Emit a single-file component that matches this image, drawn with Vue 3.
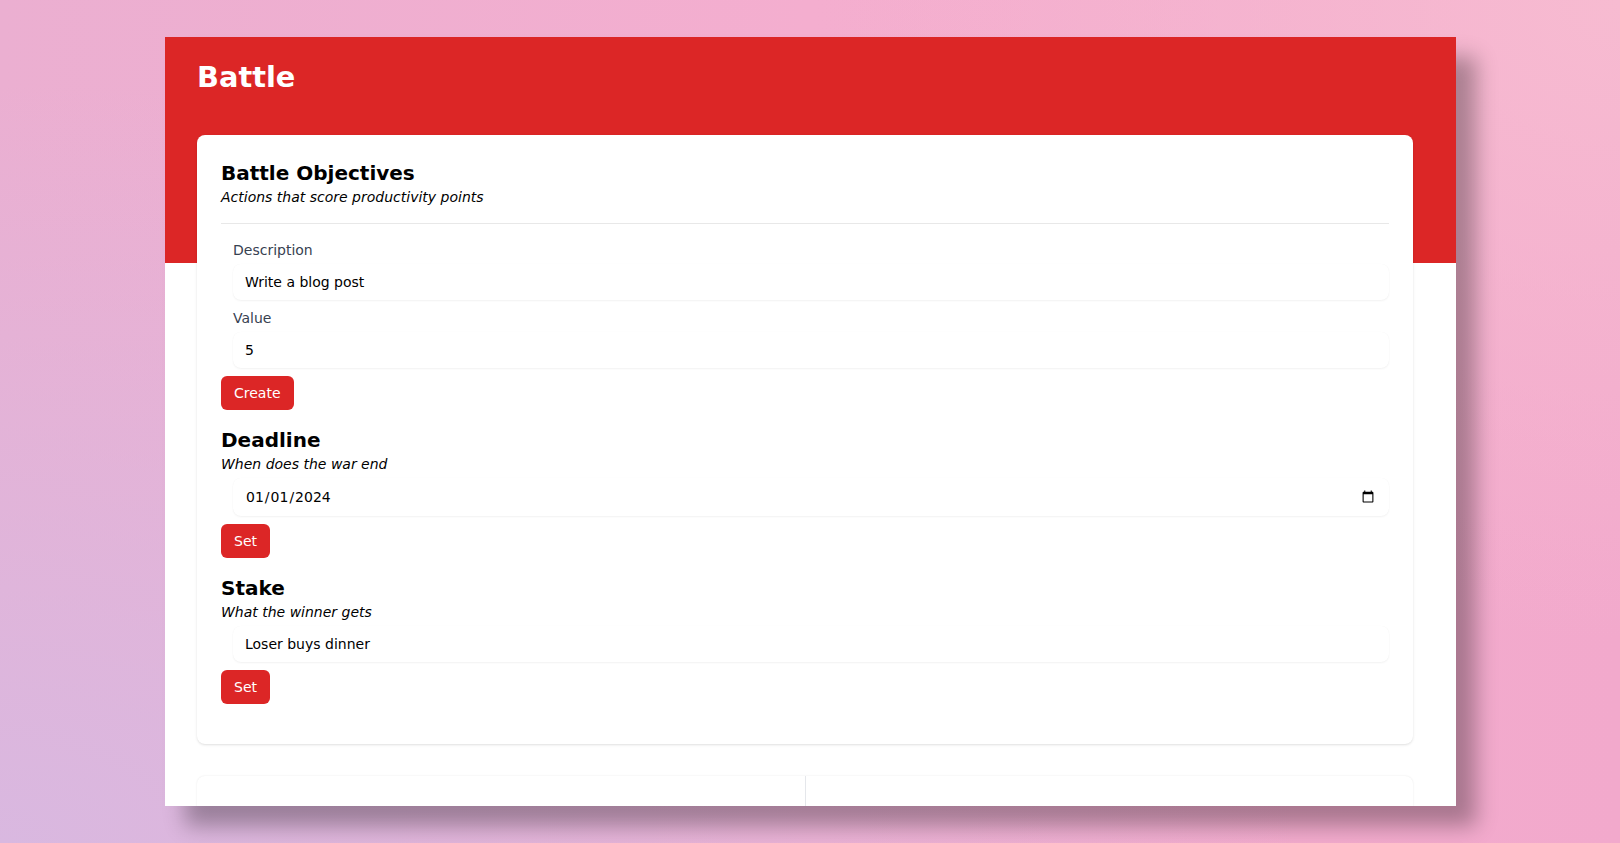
<script setup>
const objectiveDescription = 'Write a blog post'
const objectiveValue = 5
const deadline = '2024-01-01'
const stake = 'Loser buys dinner'
</script>

<template>
  <div class="page">
    <main class="window">
      <h1 class="title">Battle</h1>
      <section class="card">
        <h2 class="heading">Battle Objectives</h2>
        <p class="sub">Actions that score productivity points</p>
        <hr class="divider" />
        <label class="field">
          <span class="label">Description</span>
          <input class="input" type="text" :value="objectiveDescription" />
        </label>
        <label class="field field-next">
          <span class="label">Value</span>
          <input class="input" type="number" :value="objectiveValue" />
        </label>
        <button class="btn">Create</button>

        <h2 class="heading heading-next">Deadline</h2>
        <p class="sub">When does the war end</p>
        <input class="input input-solo input-date" type="date" :value="deadline" />
        <button class="btn">Set</button>

        <h2 class="heading heading-next">Stake</h2>
        <p class="sub">What the winner gets</p>
        <input class="input input-solo" type="text" :value="stake" />
        <button class="btn">Set</button>
      </section>
      <section class="stats">
        <div class="stat"></div>
        <div class="stat"></div>
      </section>
    </main>
  </div>
</template>

<style>
html, body { margin: 0; padding: 0; overflow: hidden; }
</style>

<style scoped>
.page {
  box-sizing: border-box;
  width: 1620px;
  height: 843px;
  padding: 37px 164px 37px 165px;
  overflow: hidden;
  background:
    radial-gradient(ellipse 1300px 760px at 0% 100%, #d9b8e0 0%, rgba(217,184,224,0) 100%),
    radial-gradient(ellipse 800px 640px at 100% 0%, #f7bbd1 0%, rgba(247,187,209,0) 100%),
    linear-gradient(to right, #ebafd1 0%, #f4aecf 50%, #f2a9cc 100%);
  font-family: "DejaVu Sans", sans-serif;
}
.window {
  box-sizing: border-box;
  height: 769px;
  padding: 0 43px 0 32px;
  overflow: hidden;
  background: linear-gradient(#dc2626 226px, #fff 226px);
  box-shadow: 20px 20px 20px rgba(0, 0, 0, 0.3);
}
.title {
  box-sizing: border-box;
  margin: 0;
  padding-top: 20px;
  height: 98px;
  color: #fff;
  font-size: 28.8px;
  line-height: 40px;
  font-weight: 700;
}
.card {
  box-sizing: border-box;
  height: 609px;
  padding: 24px;
  background: #fff;
  border-radius: 8px;
  box-shadow: 0 1px 3px rgba(0, 0, 0, 0.1), 0 1px 2px -1px rgba(0, 0, 0, 0.1);
}
.heading {
  margin: 0;
  color: #000;
  font-size: 20px;
  line-height: 28px;
  font-weight: 700;
}
.heading-next { margin-top: 16px; }
.sub {
  margin: 0;
  color: #000;
  font-size: 14px;
  line-height: 20px;
  font-style: italic;
}
.divider {
  margin: 16px 0 0;
  border: 0;
  border-top: 1px solid #e8e8e8;
}
.field { display: block; margin-top: 12px; padding-left: 12px; }
.field-next { margin-top: 4px; }
.label {
  display: block;
  padding: 4px 0;
  color: #374151;
  font-size: 14px;
  line-height: 20px;
}
.input {
  display: block;
  box-sizing: border-box;
  width: 100%;
  height: 36px;
  padding: 8px 12px;
  border: 0;
  border-radius: 8px;
  background: #fff;
  color: #000;
  font-family: inherit;
  font-size: 14px;
  line-height: 20px;
  box-shadow: 0 1px 2px rgba(0, 0, 0, 0.05), 0 0 1px rgba(0, 0, 0, 0.04);
  outline: none;
}
.input-solo {
  width: calc(100% - 12px);
  margin: 4px 0 0 12px;
}
.input-date { height: 38px; }
.btn {
  display: block;
  height: 34px;
  margin-top: 8px;
  padding: 0 13px;
  border: 0;
  border-radius: 6px;
  background: #dc2626;
  color: #fff;
  font-family: inherit;
  font-size: 14px;
  line-height: 20px;
}
.stats {
  display: grid;
  grid-template-columns: 1fr 1fr;
  margin-top: 32px;
  height: 120px;
  background: #fff;
  border-radius: 8px;
  box-shadow: 0 0 2px rgba(0, 0, 0, 0.1);
}
.stat + .stat { border-left: 1px solid #e5e7eb; }
</style>
